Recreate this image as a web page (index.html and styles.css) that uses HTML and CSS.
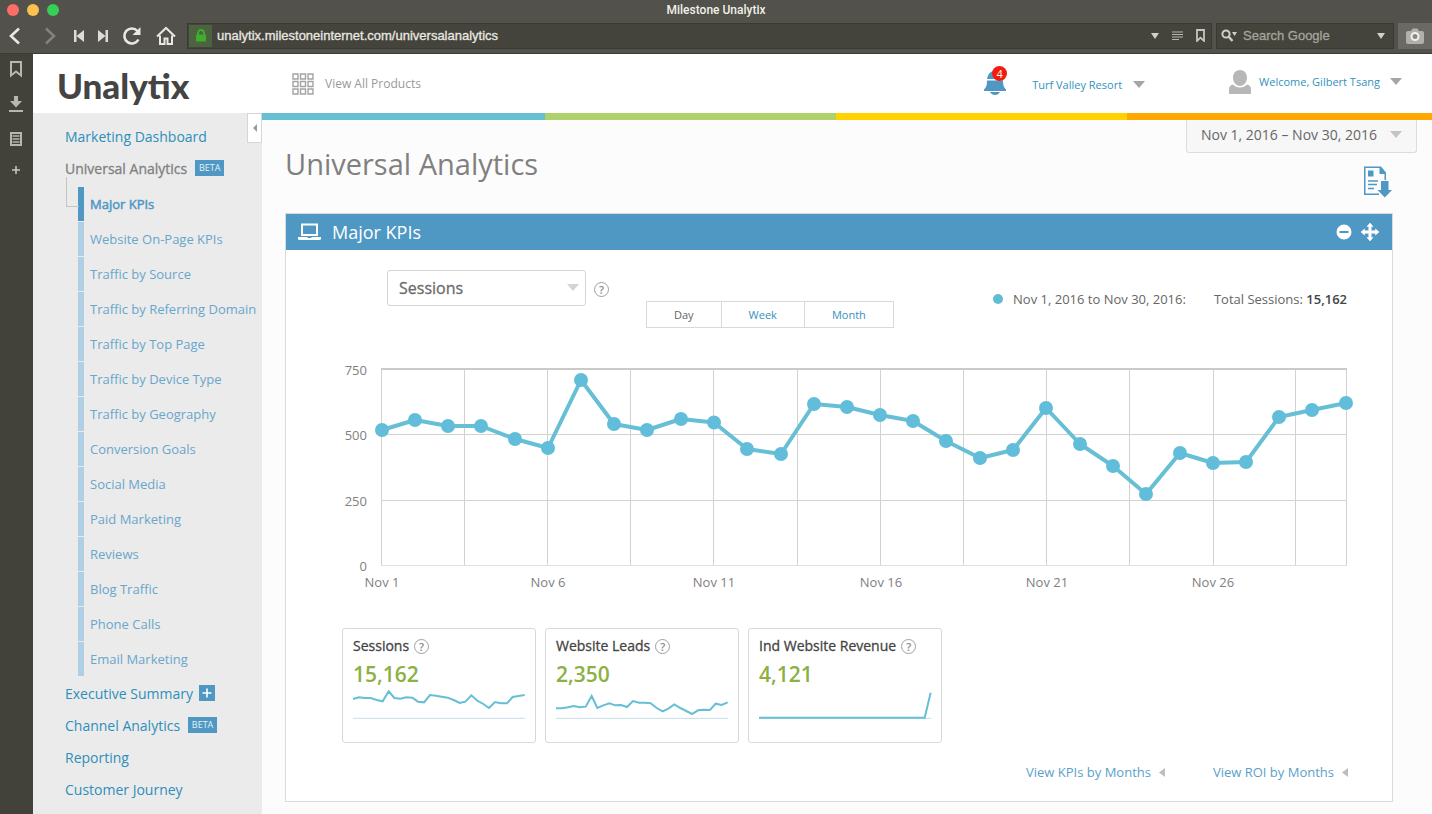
FILE: index.html
```html
<!DOCTYPE html>
<html lang="en">
<head>
<meta charset="utf-8">
<meta name="viewport" content="width=device-width, initial-scale=1">
<title>Milestone Unalytix</title>
<link rel="stylesheet" href="styles.css">
</head>
<body>
<div class="titlebar">
  <div class="lights"><span class="light red"></span><span class="light yellow"></span><span class="light green"></span></div>
  <span class="window-title">Milestone Unalytix</span>
</div>
<div class="toolbar">
  <div class="nav-buttons">
    <button class="tool" aria-label="Back"><svg width="12" height="18" viewBox="0 0 12 18"><path d="M10 1.500 2 9l8 7.500" fill="none" stroke="#e9e8e2" stroke-width="2.600"/></svg></button>
    <button class="tool" aria-label="Forward"><svg width="12" height="18" viewBox="0 0 12 18"><path d="m2 1.500 8 7.500-8 7.500" fill="none" stroke="#85847c" stroke-width="2.400"/></svg></button>
    <button class="tool" aria-label="Rewind"><svg width="10" height="12" viewBox="0 0 10 12"><path d="M0 0h2.500v12H0zM10 0v12L2.500 6z" fill="#dddcd5"/></svg></button>
    <button class="tool" aria-label="Fast forward"><svg width="10" height="12" viewBox="0 0 10 12"><path d="M7.500 0H10v12H7.500zM0 0v12l7.500-6z" fill="#dddcd5"/></svg></button>
    <button class="tool" aria-label="Reload"><svg width="20" height="20" viewBox="0 0 20 20"><path d="M16.500 13.500A7.500 7.500 0 1 1 15.500 5" fill="none" stroke="#e9e8e2" stroke-width="2.600"/><path d="M18.500 1v8h-8z" fill="#e9e8e2"/></svg></button>
    <button class="tool" aria-label="Home"><svg width="20" height="20" viewBox="0 0 20 20"><path d="M1 10.500 10 2l9 8.500M4 9.500V18h4.500v-5.500h3V18H16V9.500" fill="none" stroke="#e9e8e2" stroke-width="2"/></svg></button>
  </div>
  <div class="field address">
    <span class="lock"><svg width="12" height="13" viewBox="0 0 12 13"><path d="M3 6V4a3 3 0 0 1 6 0v2" fill="none" stroke="#3fae2f" stroke-width="1.800"/><rect x="1" y="5.500" width="10" height="7" rx="1" fill="#3fae2f"/></svg></span>
    <input class="field-input" aria-label="Address" value="unalytix.milestoneinternet.com/universalanalytics">
    <svg width="8" height="6" viewBox="0 0 8 6"><path d="M0 0h8L4 6z" fill="#d0cfc8"/></svg>
    <svg width="11" height="9" viewBox="0 0 11 9"><path d="M0 1h11M0 3.500h11M0 6h11M0 8.500h7" stroke="#b9b8b0" stroke-width="1.200"/></svg>
    <svg width="9" height="13" viewBox="0 0 9 13"><path d="M1 1h7v11L4.500 8.700 1 12z" fill="none" stroke="#c6c5be" stroke-width="1.800"/></svg>
  </div>
  <div class="field search">
    <svg width="16" height="13" viewBox="0 0 16 13"><circle cx="5" cy="5" r="3.600" fill="none" stroke="#cfcec7" stroke-width="2"/><path d="m7.500 7.500 4 4.500" stroke="#cfcec7" stroke-width="2.400"/><path d="M11 3h5l-2.500 4z" fill="#cfcec7"/></svg>
    <input class="field-input" aria-label="Search" placeholder="Search Google">
    <svg width="8" height="6" viewBox="0 0 8 6"><path d="M0 0h8L4 6z" fill="#d0cfc8"/></svg>
  </div>
  <button class="camera" aria-label="Capture page"><svg width="18" height="16" viewBox="0 0 18 16"><path d="M2 3h3l1.500-2.500h5L13 3h3a2 2 0 0 1 2 2v9a2 2 0 0 1-2 2H2a2 2 0 0 1-2-2V5a2 2 0 0 1 2-2z" fill="#b1b0ab"/><circle cx="9" cy="8.500" r="3.500" fill="#8a8983" stroke="#f2f2ee" stroke-width="2"/></svg></button>
</div>
<div class="workspace">
  <nav class="rail" aria-label="Browser panels">
    <button class="tool" aria-label="Bookmarks"><svg width="14" height="18" viewBox="0 0 14 18"><path d="M2 2h10v13.500l-5-4-5 4z" fill="none" stroke="#b7b6af" stroke-width="2"/></svg></button>
    <button class="tool" aria-label="Downloads"><svg width="14" height="18" viewBox="0 0 14 18"><path d="M5 1h4v5h4l-6 6.500L1 6h4zM0 15h14v2H0z" fill="#b7b6af"/></svg></button>
    <button class="tool" aria-label="Notes"><svg width="14" height="16" viewBox="0 0 14 16"><path d="M2 2h10v12H2z" fill="none" stroke="#b7b6af" stroke-width="2"/><path d="M3.500 5h7M3.500 8h7M3.500 11h7" stroke="#b7b6af" stroke-width="1.600"/></svg></button>
    <button class="tool add" aria-label="Add panel"><svg width="8" height="8" viewBox="0 0 8 8"><path d="M4 0v8M0 4h8" stroke="#c6c5be" stroke-width="1.600"/></svg></button>
  </nav>
  <div class="app">
    <header class="header">
      <a class="logo" href="#">Unalytix</a>
      <a class="products" href="#"><svg width="22" height="22" viewBox="0 0 22 22" fill="none" stroke="#a3a3a3" stroke-width="1.400"><path d="M1 1h5v5H1zM8.500 1h5v5h-5zM16 1h5v5h-5zM1 8.500h5v5H1zM8.500 8.500h5v5h-5zM16 8.500h5v5h-5zM1 16h5v5H1zM8.500 16h5v5h-5zM16 16h5v5h-5z"/></svg>View All Products</a>
      <button class="bell" aria-label="Notifications"><svg width="22" height="26" viewBox="0 0 22 26"><path d="M3 10C4 5 6 2 11 2s7 3 8 8z" fill="#4f98c3"/><path d="M3 11.500h16c0 4 .5 7 3 9v1.500H0V20.500c2.500-2 3-5 3-9zM6 23h10c-1 2-3 3-5 3s-4-1-5-3z" fill="#4f98c3"/></svg><span class="count">4</span></button>
      <button class="menu property">Turf Valley Resort<span class="caret"></span></button>
      <button class="menu user"><svg width="22" height="26" viewBox="0 0 22 26" fill="#b7b7b7"><path d="M11 1c4 0 7 3 7 7.500S15 17 11 17 4 13 4 8.500 7 1 11 1zM4 15.500c2 2 4 3 7 3s5-1 7-3c3 1 4 2 4 5V25H0v-4.500c0-3 1-4 4-5z"/></svg>Welcome, Gilbert Tsang<span class="caret"></span></button>
    </header>
    <div class="body">
      <aside class="sidebar">
        <button class="collapse" aria-label="Collapse menu"><svg width="4" height="8" viewBox="0 0 4 8"><path d="M4 0v8L0 4z" fill="#999"/></svg></button>
        <ul class="menu-list">
          <li><a class="top" href="#">Marketing Dashboard</a></li>
          <li class="open"><a class="top current" href="#">Universal Analytics<span class="beta">BETA</span></a>
            <ul class="sub-list">
              <li><a class="sub active" href="#">Major KPIs</a></li>
              <li><a class="sub" href="#">Website On-Page KPIs</a></li>
              <li><a class="sub" href="#">Traffic by Source</a></li>
              <li><a class="sub" href="#">Traffic by Referring Domain</a></li>
              <li><a class="sub" href="#">Traffic by Top Page</a></li>
              <li><a class="sub" href="#">Traffic by Device Type</a></li>
              <li><a class="sub" href="#">Traffic by Geography</a></li>
              <li><a class="sub" href="#">Conversion Goals</a></li>
              <li><a class="sub" href="#">Social Media</a></li>
              <li><a class="sub" href="#">Paid Marketing</a></li>
              <li><a class="sub" href="#">Reviews</a></li>
              <li><a class="sub" href="#">Blog Traffic</a></li>
              <li><a class="sub" href="#">Phone Calls</a></li>
              <li><a class="sub" href="#">Email Marketing</a></li>
            </ul>
          </li>
          <li><a class="top" href="#">Executive Summary<svg class="plus" width="16" height="16" viewBox="0 0 16 16"><path d="M0 0h16v16H0z" fill="#4f98c3"/><path d="M8 3.500v9M3.500 8h9" stroke="#fff" stroke-width="1.600"/></svg></a></li>
          <li><a class="top" href="#">Channel Analytics<span class="beta">BETA</span></a></li>
          <li><a class="top" href="#">Reporting</a></li>
          <li><a class="top" href="#">Customer Journey</a></li>
        </ul>
      </aside>
      <main class="main">
        <div class="stripe"><span class="s1"></span><span class="s2"></span><span class="s3"></span><span class="s4"></span></div>
        <div class="page-top">
          <h1 class="page-title">Universal Analytics</h1>
          <div class="page-tools">
            <button class="dates">Nov 1, 2016 – Nov 30, 2016<span class="caret light-caret"></span></button>
            <button class="export" aria-label="Export report"><svg width="30" height="34" viewBox="0 0 30 34"><path d="M1 1.500h17l5 6V15h-1.500V9H16.500V3H2.500v25.500H16V30H1z" fill="#4f98c3"/><path d="M5 5.500h5.500v6H5z" fill="#4f98c3"/><path d="M5 16h10M5 19.500h9M5 23.500h6" stroke="#4f98c3" stroke-width="1.400"/><path d="M18 16h7.500v9H29l-7.200 7.500L14.500 25H18z" fill="#4f98c3"/></svg></button>
          </div>
        </div>
        <section class="panel">
          <header class="panel-head">
            <svg width="23" height="18" viewBox="0 0 23 18"><path d="M4 1.500h15v10.500H4z" fill="none" stroke="#fff" stroke-width="2"/><path d="M0 14h9.500v1h4v-1H23v1.500a1.500 1.500 0 0 1-1.500 1.500h-20A1.500 1.500 0 0 1 0 15.500z" fill="#fff"/></svg>
            <h2 class="panel-title">Major KPIs</h2>
            <button class="tool" aria-label="Minimize"><svg width="16" height="16" viewBox="0 0 16 16"><circle cx="8" cy="8" r="7.500" fill="#fff"/><path d="M3.500 8h9" stroke="#4f98c3" stroke-width="2"/></svg></button>
            <button class="tool" aria-label="Move"><svg width="18" height="18" viewBox="0 0 18 18"><path d="M9 0l3 3.500h-1.800v4.300h4.300V6L18 9l-3.500 3v-1.800h-4.300v4.300H12L9 18l-3-3.500h1.800v-4.300H3.500V12L0 9l3.500-3v1.800h4.300V3.500H6z" fill="#fff" stroke="#fff" stroke-width=".6"/></svg></button>
          </header>
          <div class="controls">
            <div class="select-wrap"><select class="metric" aria-label="Metric"><option>Sessions</option></select><span class="caret pale-caret"></span></div>
            <button class="help" aria-label="Help">?</button>
            <div class="range">
              <button class="seg on">Day</button><button class="seg">Week</button><button class="seg">Month</button>
            </div>
            <div class="legend"><span class="dot"></span><span>Nov 1, 2016 to Nov 30, 2016:</span><span class="total">Total Sessions: <strong>15,162</strong></span></div>
          </div>
          <svg class="chart" viewBox="286 360 1106 235" role="img" aria-label="Sessions by day">
            <path class="grid" d="M381.500 369v196.500M464.500 369v196.500M547.500 369v196.500M630.500 369v196.500M713.500 369v196.500M797.500 369v196.500M880.500 369v196.500M963.500 369v196.500M1046.500 369v196.500M1129.500 369v196.500M1213.500 369v196.500M1295.500 369v196.500M1346.500 369v196.500M381 434.500h966M381 500.500h966"/>
            <path class="grid-top" d="M381 369h966"/>
            <path class="grid-base" d="M381 565.500h966"/>
            <path class="line" d="M382 430L415 420L448 426L481 426L515 439L548 448L581 380L614 424L647 430L681 419L714 422.500L747 449L781 454L814 404L847 407L880 415L913 421L946 441L980 458L1013 450L1046 408L1080 444L1113 466L1146 494L1180 453L1213 463L1246 462L1279 417L1312 410L1346 403"/>
            <path class="marks" d="M382 430h0M415 420h0M448 426h0M481 426h0M515 439h0M548 448h0M581 380h0M614 424h0M647 430h0M681 419h0M714 422.500h0M747 449h0M781 454h0M814 404h0M847 407h0M880 415h0M913 421h0M946 441h0M980 458h0M1013 450h0M1046 408h0M1080 444h0M1113 466h0M1146 494h0M1180 453h0M1213 463h0M1246 462h0M1279 417h0M1312 410h0M1346 403h0"/>
            <g class="axis y-axis"><text x="367" y="375">750</text><text x="367" y="440">500</text><text x="367" y="506">250</text><text x="367" y="571">0</text></g>
            <g class="axis x-axis"><text x="382" y="587">Nov 1</text><text x="548" y="587">Nov 6</text><text x="714" y="587">Nov 11</text><text x="881" y="587">Nov 16</text><text x="1047" y="587">Nov 21</text><text x="1213" y="587">Nov 26</text></g>
          </svg>
          <div class="cards">
            <article class="card"><h3 class="card-title">Sessions<button class="help" aria-label="Help">?</button></h3><p class="value">15,162</p>
              <svg class="spark" viewBox="0 0 516 108"><path class="spark-base" d="M0 100h516"/><path class="spark-line" d="M0 42L18 37L36 39L53 39L71 45L89 49L107 19L124 39L142 41L160 37L178 38L195 50L213 52L231 30L249 32L266 35L284 38L302 45L320 54L337 50L355 31L373 47L391 57L408 69L426 51L444 55L462 55L479 36L497 33L515 30"/></svg></article>
            <article class="card"><h3 class="card-title">Website Leads<button class="help" aria-label="Help">?</button></h3><p class="value">2,350</p>
              <svg class="spark" viewBox="0 0 516 108"><path class="spark-base" d="M0 100h516"/><path class="spark-line" d="M0 70L18 70L36 67L53 63L71 67L89 65L107 33L124 69L142 61L160 55L178 61L195 60L213 66L231 48L249 53L266 53L284 55L302 69L320 79L337 71L355 58L373 69L391 78L408 87L426 76L444 74L462 75L479 56L497 60L515 52"/></svg></article>
            <article class="card"><h3 class="card-title">Ind Website Revenue<button class="help" aria-label="Help">?</button></h3><p class="value">4,121</p>
              <svg class="spark" viewBox="0 0 516 108"><path class="spark-base" d="M0 100h516"/><path class="spark-line" d="M0 98H497L515 23"/></svg></article>
          </div>
          <div class="links">
            <a class="more" href="#">View KPIs by Months<svg width="6" height="9" viewBox="0 0 6 9"><path d="M6 0v9L0 4.500z" fill="#bdbdbd"/></svg></a>
            <a class="more" href="#">View ROI by Months<svg width="6" height="9" viewBox="0 0 6 9"><path d="M6 0v9L0 4.500z" fill="#bdbdbd"/></svg></a>
          </div>
        </section>
      </main>
    </div>
  </div>
</div>
</body>
</html>
```
FILE: styles.css
```css
* { box-sizing: border-box; }
body {
  margin: 0;
  min-height: 100vh;
  display: flex;
  flex-direction: column;
  font-family: "Open Sans", "Noto Sans", sans-serif;
  font-size: 13px;
  color: #666;
  background: #52514b;
}
button, input, select { font: inherit; color: inherit; }
button { border: 0; padding: 0; background: none; cursor: pointer; }
a { color: inherit; text-decoration: none; }
ul { list-style: none; margin: 0; padding: 0; }
h1, h2, h3, p { margin: 0; font-weight: 400; }
svg { display: block; flex: none; }

/* browser chrome */
.titlebar {
  display: grid;
  grid-template-columns: 1fr auto 1fr;
  align-items: center;
  height: 19px;
  color: #f1f0ea;
  font: 500 12px Roboto, Arial, sans-serif;
}
.lights { display: flex; gap: 8px; padding-left: 7px; }
.light { width: 12px; height: 12px; border-radius: 50%; }
.red { background: #fc6e66; }
.yellow { background: #fdc14f; }
.green { background: #36cf56; }
.toolbar { display: flex; align-items: center; height: 35px; padding-bottom: 1px; border-bottom: 1px solid #3c3b35; }
.nav-buttons { display: flex; align-items: center; padding-left: 9px; width: 187px; flex: none; }
.tool { display: flex; align-items: center; justify-content: center; }
.nav-buttons .tool:nth-child(1) { margin-right: 23px; }
.nav-buttons .tool:nth-child(2) { margin-right: 18px; }
.nav-buttons .tool:nth-child(3) { margin-right: 14px; }
.nav-buttons .tool:nth-child(4) { margin-right: 14px; }
.nav-buttons .tool:nth-child(5) { margin-right: 14px; }
.field {
  display: flex;
  align-items: center;
  height: 26px;
  background: #45443c;
  border: 1px solid #3a3932;
  font: 13px "Liberation Sans", Arial, sans-serif;
}
.address { flex: 1; gap: 13px; padding: 0 6px 0 1px; color: #e9e8e2; }
.lock { display: flex; align-items: center; justify-content: center; width: 23px; height: 22px; background: #4b633f; margin-right: -8px; }
.field-input { flex: 1; min-width: 0; border: 0; padding: 0; background: none; outline: 0; -webkit-text-stroke: 0.300px; }
.search { width: 178px; flex: none; margin-left: 4px; padding: 0 8px 0 4px; gap: 6px; color: #a5a49d; }
.field-input::placeholder { color: #a5a49d; opacity: 1; }
.camera { display: flex; align-items: center; justify-content: center; width: 34px; height: 26px; margin-left: 4px; background: #6a6963; flex: none; }
.workspace { flex: 1; display: flex; }
.rail { width: 33px; flex: none; background: #42413a; display: flex; flex-direction: column; align-items: center; padding-top: 6px; padding-right: 1px; gap: 17px; }
.rail .tool { height: 18px; }
.rail .add { height: 10px; }

/* application header */
.app { flex: 1; min-width: 0; display: flex; flex-direction: column; background: #fcfcfc; }
.header { display: flex; align-items: center; height: 59px; background: #fff; padding: 0 30px 0 24px; }
.logo { font: 900 35px/40px Lato, sans-serif; color: #444; width: 235px; margin-top: 3px; }
.products { display: flex; align-items: center; gap: 11px; color: #999; font-size: 12px; }
.bell { position: relative; margin: 0 0 4px auto; }
.count {
  position: absolute;
  top: -3px;
  left: 8px;
  width: 15px;
  height: 15px;
  border-radius: 50%;
  background: #f21b0c;
  color: #fff;
  font-size: 11px;
  line-height: 15px;
}
.menu { display: flex; align-items: center; color: #3392be; font-size: 11px; }
.property { margin-left: 26px; margin-top: 2px; gap: 11px; }
.user { margin-left: 84px; margin-bottom: 4px; gap: 8px; }
.user .caret { margin-left: 2px; }
.caret { border: 6px solid transparent; border-top: 7px solid #a5a5a5; border-bottom: 0; }

/* sidebar */
.body { flex: 1; display: flex; }
.sidebar { position: relative; width: 229px; flex: none; background: #ebebeb; padding: 7px 0 0 32px; }
.collapse {
  position: absolute;
  top: 0;
  right: 0;
  width: 15px;
  height: 30px;
  background: #fff;
  border: 1px solid #d6d6d6;
  display: flex;
  align-items: center;
  justify-content: center;
}
.top { display: flex; align-items: center; height: 32px; font-size: 14px; color: #2d8fba; }
.current { color: #808080; -webkit-text-stroke: 0.300px; }
.beta { margin-left: 8px; width: 29px; height: 16px; background: #4f98c3; color: #e5f1f8; font-size: 9px; line-height: 16px; text-align: center; -webkit-text-stroke: 0; }
.plus { margin-left: 6px; }
.open { position: relative; }
.open::before {
  content: "";
  position: absolute;
  left: 1px;
  top: 25px;
  width: 12px;
  height: 29px;
  border: solid #c4c4c4;
  border-width: 0 0 1px 1px;
}
.sub-list { padding: 3px 0 0 13px; }
.sub { display: block; height: 34px; margin-bottom: 1px; border-left: 6px solid #b1cfe4; padding-left: 6px; line-height: 34px; font-size: 13px; color: #69a6cc; white-space: nowrap; }
.active { border-color: #4f98c3; color: #4f98c3; -webkit-text-stroke: 0.500px; }

/* page */
.main { flex: 1; min-width: 0; }
.stripe { display: grid; grid-template-columns: 283fr 291fr 291fr 305fr; height: 7px; }
.s1 { background: #66bfd5; }
.s2 { background: #afd16b; }
.s3 { background: #ffd200; }
.s4 { background: #ffa800; }
.page-top { display: flex; justify-content: space-between; padding: 0 15px 0 23px; height: 93px; }
.page-title { font-size: 29px; line-height: 40px; margin-top: 24px; color: #808080; }
.page-tools { display: flex; flex-direction: column; align-items: flex-end; }
.dates { display: flex; align-items: center; gap: 13px; height: 33px; padding: 0 14px 3px 14px; font-size: 14px; color: #666; background: #f7f7f7; border: 1px solid #dcdcdc; border-top: 0; border-radius: 0 0 3px 3px; }
.light-caret { border-top-color: #c4c4c4; }
.pale-caret { border-top-color: #d4d4d4; }
.export { margin: 12px 24px 0 0; }

.panel { margin: 0 39px 12px 23px; background: #fff; border: 1px solid #d8dadb; }
.panel-head { display: flex; align-items: center; height: 36px; padding: 0 13px 0 12px; background: #4f98c3; color: #fff; }
.panel-title { margin: 0 auto 0 11px; font-size: 18px; }
.panel-head .tool + .tool { margin-left: 9px; }
.controls { display: flex; height: 78px; padding: 20px 45px 0 101px; }
.select-wrap { position: relative; width: 199px; height: 36px; }
.metric { appearance: none; width: 100%; height: 100%; padding: 0 11px; border: 1px solid #d5d5d5; border-radius: 3px; background: #fff; font-size: 16px; color: #6b6b6b; -webkit-text-stroke: 0.300px; }
.select-wrap .caret { position: absolute; right: 7px; top: 14px; pointer-events: none; }
.help { width: 15px; height: 15px; border: 1px solid #a0a0a0; border-radius: 50%; color: #8a8a8a; font-size: 11px; font-weight: 600; line-height: 13px; text-align: center; flex: none; -webkit-text-stroke: 0; }
.controls .help { margin: 12px 37px 0 8px; }
.range { display: flex; align-self: flex-end; height: 27px; border: 1px solid #d9d9d9; }
.seg { padding: 0 27px; font-size: 11px; color: #3392be; }
.seg + .seg { border-left: 1px solid #d9d9d9; }
.on { color: #666; }
.legend { display: flex; align-items: center; margin-left: auto; }
.dot { width: 10px; height: 10px; border-radius: 50%; background: #62bdd3; margin-right: 10px; }
.total { margin-left: 28px; }
.total strong { color: #444; font-weight: 600; }

.chart { width: 100%; height: auto; margin-top: 32px; overflow: visible; }
.grid { fill: none; stroke: #d2d2d2; stroke-width: 1; }
.grid-top { stroke: #cacaca; stroke-width: 2; }
.grid-base { stroke: #d8e2ea; stroke-width: 1; }
.line { fill: none; stroke: #66bfd5; stroke-width: 4; stroke-linejoin: round; }
.marks { stroke: #62bdda; stroke-width: 14; stroke-linecap: round; }
.axis { font-size: 13px; fill: #808080; }
.y-axis { text-anchor: end; }
.x-axis { text-anchor: middle; }

.cards { display: flex; gap: 9px; margin: 33px 56px 0; }
.card { width: 194px; height: 115px; padding: 7px 10px 0; border: 1px solid #d9d9d9; border-radius: 3px; }
.card-title { display: flex; align-items: center; gap: 5px; font-size: 14px; line-height: 20px; color: #444; -webkit-text-stroke: 0.300px; }
.value { font-size: 21px; line-height: 30px; margin-top: 3px; color: #8cb043; font-weight: 600; }
.spark { width: 172px; height: 36px; margin-top: -4px; overflow: visible; }
.spark-base { stroke: #c8dcea; stroke-width: 3; }
.spark-line { fill: none; stroke: #66bfd5; stroke-width: 6; }
.links { display: flex; justify-content: flex-end; gap: 48px; padding: 19px 44px 19px; }
.more { display: flex; align-items: center; gap: 8px; line-height: 20px; font-size: 13px; color: #5a9fc9; }
```
